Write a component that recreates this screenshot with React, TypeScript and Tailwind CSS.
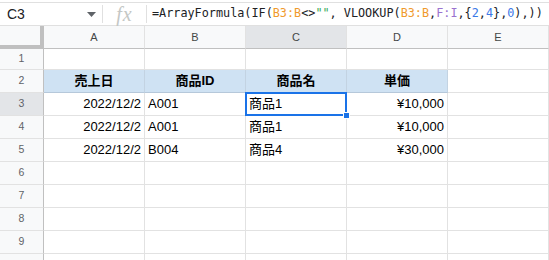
import React from "react";

const cols = ["A", "B", "C", "D", "E"];

type Cell = { t?: string; align?: "left" | "right" | "center"; bold?: boolean };

const empty: Cell[] = [{}, {}, {}, {}, {}];

const rows: { h: string; cells: Cell[]; hdr?: boolean }[] = [
  { h: "h-[21px]", cells: empty },
  {
    h: "h-[23px]",
    hdr: true,
    cells: [
      { t: "売上日", align: "center", bold: true },
      { t: "商品ID", align: "center", bold: true },
      { t: "商品名", align: "center", bold: true },
      { t: "単価", align: "center", bold: true },
      {},
    ],
  },
  {
    h: "h-[23px]",
    cells: [
      { t: "2022/12/2", align: "right" },
      { t: "A001", align: "left" },
      { t: "商品1", align: "left" },
      { t: "¥10,000", align: "right" },
      {},
    ],
  },
  {
    h: "h-[23px]",
    cells: [
      { t: "2022/12/2", align: "right" },
      { t: "A001", align: "left" },
      { t: "商品1", align: "left" },
      { t: "¥10,000", align: "right" },
      {},
    ],
  },
  {
    h: "h-[23px]",
    cells: [
      { t: "2022/12/2", align: "right" },
      { t: "B004", align: "left" },
      { t: "商品4", align: "left" },
      { t: "¥30,000", align: "right" },
      {},
    ],
  },
  { h: "h-[23px]", cells: empty },
  { h: "h-[23px]", cells: empty },
  { h: "h-[23px]", cells: empty },
  { h: "h-[23px]", cells: empty },
  { h: "h-[23px]", cells: empty },
];

const OR = "text-[#f09a2c]";
const GR = "text-[#34a853]";
const PU = "text-[#9b72cf]";
const BL = "text-[#3b78e7]";

export default function App() {
  return (
    <div
      className="w-[549px] h-[260px] overflow-hidden bg-white text-black"
      style={{ fontFamily: '"Liberation Sans", "Noto Sans CJK JP", Arial, sans-serif' }}
    >
      {/* formula bar */}
      <div className="mt-[2px] h-[24px] border-t border-b border-[#e0e0e0] flex items-center">
        <div className="w-[102px] h-full flex items-center justify-between pl-[7px] pr-[6px]">
          <span className="text-[14px] text-[#202124]">C3</span>
          <svg width="9" height="5" viewBox="0 0 9 5">
            <path d="M0 0 L9 0 L4.5 5 Z" fill="#5f6368" />
          </svg>
        </div>
        <div className="w-px h-[18px] bg-[#e0e0e0]" />
        <div className="w-[43px] h-full flex items-center justify-center">
          <span
            className="italic text-[20px] text-[#c4c7c5] leading-none tracking-[1px]"
            style={{ fontFamily: '"Liberation Serif", serif' }}
          >
            fx
          </span>
        </div>
        <div className="w-px h-[18px] bg-[#e0e0e0]" />
        <div
          className="pl-[5px] text-[11.8px] whitespace-nowrap text-[#202124]"
          style={{ fontFamily: '"DejaVu Sans Mono", "Liberation Mono", monospace' }}
        >
          =ArrayFormula(IF(<span className={OR}>B3:B</span>&lt;&gt;<span className={GR}>""</span>, VLOOKUP(
          <span className={OR}>B3:B</span>,<span className={PU}>F:I</span>,{"{"}
          <span className={BL}>2</span>,<span className={BL}>4</span>
          {"}"},<span className={BL}>0</span>),))
        </div>
      </div>

      {/* grid */}
      <div className="grid grid-cols-[44px_101px_101px_101px_101px_101px]">
        {/* column header row */}
        <div className="h-[23px] bg-[#f8f9fa] border-r-4 border-b-4 border-[#c0c0c0]" />
        {cols.map((c) => (
          <div
            key={c}
            className={`h-[23px] border-r border-b border-[#c0c0c0] border-r-[#e2e2e2] flex items-center justify-center text-[11px] text-[#444746] ${
              c === "C" ? "bg-[#e3e5e8]" : "bg-[#f8f9fa]"
            }`}
          >
            {c}
          </div>
        ))}

        {rows.map((r, i) => {
          const n = i + 1;
          return (
            <React.Fragment key={n}>
              <div
                className={`${r.h} border-r border-r-[#c0c0c0] border-b border-b-[#e2e2e2] flex items-center justify-center text-[10.5px] text-[#5f6368] ${
                  n === 3 ? "bg-[#e3e5e8]" : "bg-[#f8f9fa]"
                }`}
              >
                {n < 10 ? n : ""}
              </div>
              {r.cells.map((c, j) => {
                const hdr = r.hdr && j < 4;
                const sel = n === 3 && j === 2;
                return (
                  <div
                    key={j}
                    className={`${r.h} relative border-r border-b flex items-center text-[13px] px-[3px] whitespace-nowrap ${
                      hdr ? "bg-[#cfe2f3] border-r-[#c3d3e2] border-b-[#b6c8da]" : "bg-white border-[#e2e2e2]"
                    } ${
                      c.align === "right" ? "justify-end" : c.align === "center" ? "justify-center" : "justify-start"
                    } ${c.bold ? "font-bold" : ""} ${sel ? "z-10" : ""}`}
                  >
                    {c.t}
                    {sel && (
                      <>
                        <div className="absolute -left-px -top-px right-[-1px] bottom-[-1px] border-2 border-[#1a73e8] pointer-events-none" />
                        <div className="absolute right-[-4px] bottom-[-4px] w-[7px] h-[7px] bg-[#1a73e8] border border-white" />
                      </>
                    )}
                  </div>
                );
              })}
            </React.Fragment>
          );
        })}
      </div>
    </div>
  );
}
